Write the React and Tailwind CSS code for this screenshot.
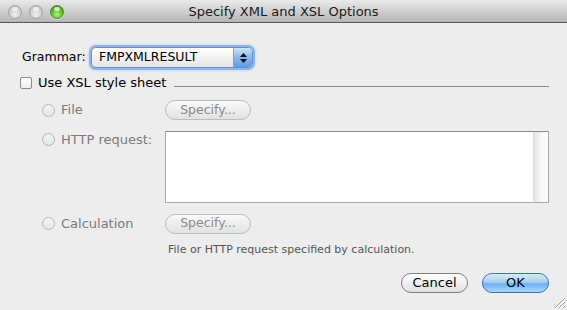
import React from "react";

const font = { fontFamily: '"DejaVu Sans", "Noto Sans", sans-serif' };

function Light({ color }) {
  if (color === "green") {
    return (
      <div className="w-[14px] h-[14px] rounded-full border border-[#4f8a2c] bg-[radial-gradient(circle_at_50%_70%,#b8f27a_0%,#5cc12a_50%,#2f7a14_100%)] shadow-[0_1px_0_rgba(255,255,255,0.5)] relative">
        <div className="absolute left-[3px] top-[1px] w-[6px] h-[4px] rounded-full bg-white/70" />
      </div>
    );
  }
  return (
    <div className="w-[14px] h-[14px] rounded-full border border-[#a4a4a4] bg-[radial-gradient(circle_at_50%_70%,#f0f0f0_0%,#cfcfcf_55%,#b5b5b5_100%)] relative">
      <div className="absolute left-[3px] top-[1px] w-[6px] h-[4px] rounded-full bg-white/60" />
    </div>
  );
}

function Radio() {
  return (
    <div className="w-[13px] h-[13px] rounded-full border border-[#b4b4b4] bg-[linear-gradient(#f4f4f4,#e6e6e6)] shrink-0" />
  );
}

function PillButton({ children, className = "" }) {
  return (
    <div
      className={
        "h-[20px] rounded-full border border-[#bdbdbd] bg-[linear-gradient(#fbfbfb,#ececec_55%,#e2e2e2)] flex items-center justify-center text-[12.5px] text-[#8a8a8a] " +
        className
      }
    >
      {children}
    </div>
  );
}

export default function App() {
  return (
    <div className="w-[567px] h-[310px] bg-[#ededed] flex flex-col relative overflow-hidden" style={font}>
      {/* Title bar */}
      <div className="h-[23px] shrink-0 border-b border-[#5a5a5a] bg-[linear-gradient(#e9e9e9,#cfcfcf_50%,#b6b6b6)] flex items-center relative">
        <div className="flex items-center gap-[7px] pl-[8px] pt-[1px]">
          <Light />
          <Light />
          <Light color="green" />
        </div>
        <div className="absolute inset-0 flex items-center justify-center text-[13px] text-[#1a1a1a] pt-[1px]">
          Specify XML and XSL Options
        </div>
      </div>

      {/* Grammar row */}
      <div className="flex items-center pl-[22px] mt-[24px] h-[21px]">
        <div className="text-[12.5px] text-black w-[69px]">Grammar:</div>
        <div className="w-[162px] h-[21px] rounded-[5px] border border-[#6d8fc4] shadow-[0_0_0_2px_#8fb3e8,0_0_3px_2px_#aecbf0] bg-[linear-gradient(#ffffff,#f1f1f1_50%,#e6e6e6)] flex items-stretch overflow-hidden">
          <div className="flex-1 flex items-center pl-[7px] text-[12.5px] text-black">FMPXMLRESULT</div>
          <div className="w-[19px] border-l border-[#7fa1d1] bg-[linear-gradient(#cfe3fa,#8ab7ee_50%,#5d9be6)] flex flex-col items-center justify-center gap-[2px]">
            <svg width="7" height="4" viewBox="0 0 7 4"><path d="M0 4 L3.5 0 L7 4 Z" fill="#111" /></svg>
            <svg width="7" height="4" viewBox="0 0 7 4"><path d="M0 0 L3.5 4 L7 0 Z" fill="#111" /></svg>
          </div>
        </div>
      </div>

      {/* Use XSL checkbox row */}
      <div className="flex items-center pl-[20px] mt-[5px] h-[20px]">
        <div className="w-[12px] h-[12px] rounded-[2px] border border-[#8c8c8c] bg-[linear-gradient(#ffffff,#ececec)] shrink-0" />
        <div className="ml-[6px] text-[13px] text-black">Use XSL style sheet</div>
        <div className="flex-1 h-px bg-[#8a8a8a] ml-[8px] mr-[18px] mt-[6px]" />
      </div>

      {/* File row */}
      <div className="flex items-center h-[20px] mt-[7px]">
        <div className="w-[165px] pl-[42px] flex items-center shrink-0">
          <Radio />
          <span className="ml-[6px] text-[13px] text-[#7a7a7a]">File</span>
        </div>
        <PillButton className="w-[86px]">Specify...</PillButton>
      </div>

      {/* HTTP row */}
      <div className="flex items-start mt-[11px]">
        <div className="w-[165px] pl-[42px] flex items-center shrink-0 mt-[-1px]">
          <Radio />
          <span className="ml-[6px] text-[13px] text-[#7a7a7a]">HTTP request:</span>
        </div>
        <div className="w-[384px] h-[72px] border border-[#a9a9a9] border-t-[#8e8e8e] bg-white flex justify-end">
          <div className="w-[15px] h-full border-l border-[#e0e0e0] bg-[linear-gradient(90deg,#e4e4e4,#f7f7f7_50%,#fbfbfb)]" />
        </div>
      </div>

      {/* Calculation row */}
      <div className="flex items-center h-[21px] mt-[10px]">
        <div className="w-[165px] pl-[42px] flex items-center shrink-0">
          <Radio />
          <span className="ml-[6px] text-[13px] text-[#7a7a7a]">Calculation</span>
        </div>
        <PillButton className="w-[86px]">Specify...</PillButton>
      </div>

      {/* footnote */}
      <div className="pl-[168px] mt-[8px] text-[11px] text-[#555]">File or HTTP request specified by calculation.</div>

      {/* Buttons */}
      <div className="flex justify-end gap-[14px] pr-[18px] mt-[14px]">
        <div className="w-[67px] h-[20px] rounded-full border border-[#7e7e7e] bg-[linear-gradient(#ffffff,#f0f0f0_50%,#e0e0e0)] flex items-center justify-center text-[13px] text-black">
          Cancel
        </div>
        <div className="w-[67px] h-[20px] rounded-full border border-[#3d6fb8] bg-[linear-gradient(#d7ebfd,#a6d0f8_45%,#6fb2f2_55%,#a8d6fb)] flex items-center justify-center text-[13px] text-black">
          OK
        </div>
      </div>

      {/* resize grip */}
      <svg className="absolute right-[2px] bottom-[2px]" width="11" height="11" viewBox="0 0 11 11">
        <path d="M1 11 L11 1 M5 11 L11 5 M9 11 L11 9" stroke="#9a9a9a" strokeWidth="1" />
        <path d="M2 11 L11 2 M6 11 L11 6" stroke="#ffffff" strokeWidth="1" />
      </svg>
    </div>
  );
}
